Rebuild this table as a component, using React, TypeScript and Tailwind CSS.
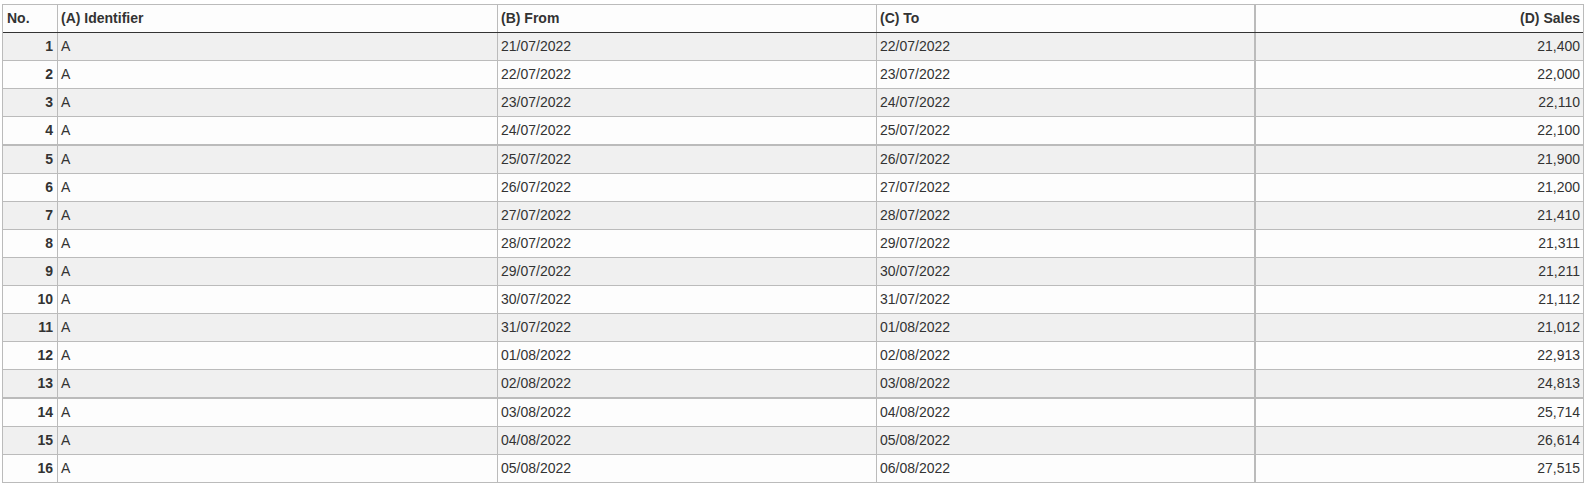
import React from "react";

const rows: [string, string, string][] = [
  ["21/07/2022", "22/07/2022", "21,400"],
  ["22/07/2022", "23/07/2022", "22,000"],
  ["23/07/2022", "24/07/2022", "22,110"],
  ["24/07/2022", "25/07/2022", "22,100"],
  ["25/07/2022", "26/07/2022", "21,900"],
  ["26/07/2022", "27/07/2022", "21,200"],
  ["27/07/2022", "28/07/2022", "21,410"],
  ["28/07/2022", "29/07/2022", "21,311"],
  ["29/07/2022", "30/07/2022", "21,211"],
  ["30/07/2022", "31/07/2022", "21,112"],
  ["31/07/2022", "01/08/2022", "21,012"],
  ["01/08/2022", "02/08/2022", "22,913"],
  ["02/08/2022", "03/08/2022", "24,813"],
  ["03/08/2022", "04/08/2022", "25,714"],
  ["04/08/2022", "05/08/2022", "26,614"],
  ["05/08/2022", "06/08/2022", "27,515"],
];

export default function App() {
  return (
    <div
      className="w-[1590px] h-[486px] bg-white pt-[4px] pl-[2px] text-[14px] text-[#333]"
      style={{ fontFamily: '"Liberation Sans", Arial, sans-serif' }}
    >
      <div className="w-[1582px] border border-[#bbb] bg-[#fdfdfd]">
        <div className="flex h-[28px] border-b border-[#333] font-bold">
          <div className="w-[55px] border-r border-[#bbb] flex items-center px-[4px]">No.</div>
          <div className="w-[440px] border-r border-[#bbb] flex items-center px-[3px]">(A) Identifier</div>
          <div className="w-[379px] border-r border-[#bbb] flex items-center px-[3px]">(B) From</div>
          <div className="w-[379px] border-r-2 border-[#bbb] flex items-center px-[3px]">(C) To</div>
          <div className="flex-1 flex items-center justify-end pr-[3px]">(D) Sales</div>
        </div>
        {rows.map((r, i) => {
          const n = i + 1;
          const odd = n % 2 === 1;
          const last = n === rows.length;
          const thick = n === 4 || n === 13;
          return (
            <div
              key={n}
              className={
                "flex " +
                (odd ? "bg-[#f0f0f0] " : "bg-[#fdfdfd] ") +
                (last
                  ? "h-[27px]"
                  : thick
                  ? "h-[29px] border-b-2 border-[#bbb]"
                  : "h-[28px] border-b border-[#bbb]")
              }
            >
              <div className="w-[55px] border-r border-[#bbb] flex items-center justify-end pr-[4px] font-bold">{n}</div>
              <div className="w-[440px] border-r border-[#bbb] flex items-center px-[3px]">A</div>
              <div className="w-[379px] border-r border-[#bbb] flex items-center px-[3px]">{r[0]}</div>
              <div className="w-[379px] border-r-2 border-[#bbb] flex items-center px-[3px]">{r[1]}</div>
              <div className="flex-1 flex items-center justify-end pr-[3px]">{r[2]}</div>
            </div>
          );
        })}
      </div>
    </div>
  );
}
